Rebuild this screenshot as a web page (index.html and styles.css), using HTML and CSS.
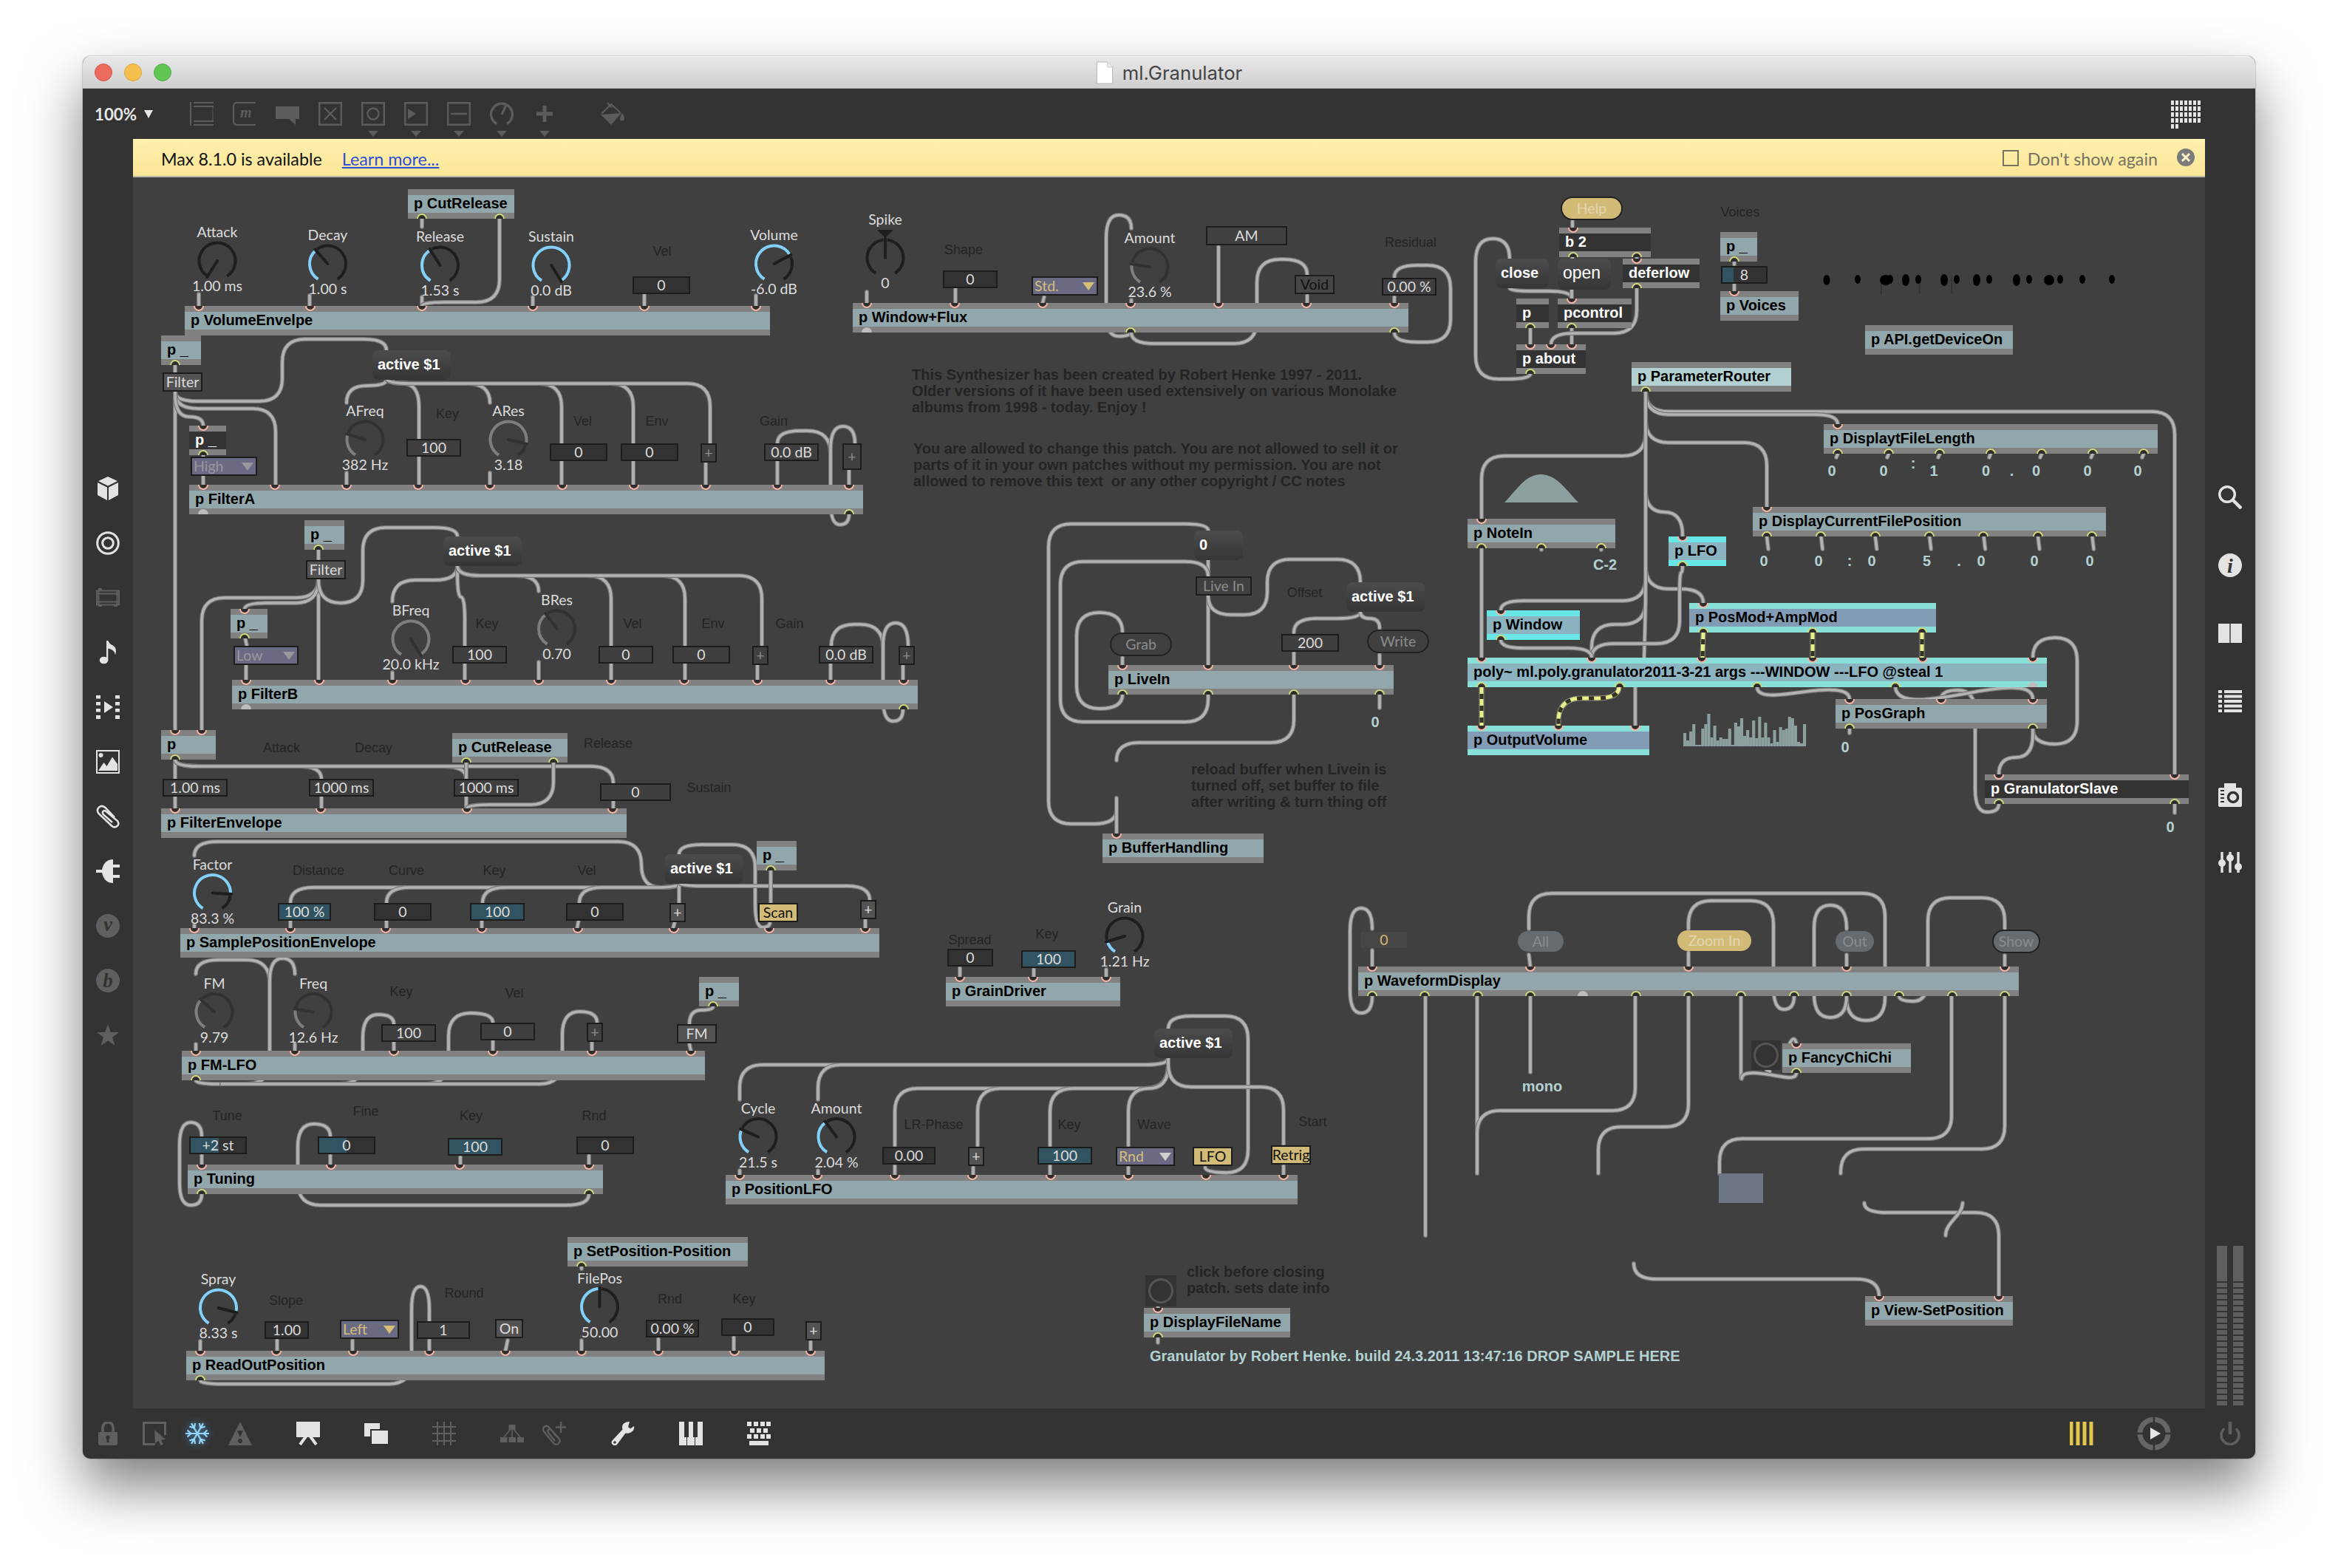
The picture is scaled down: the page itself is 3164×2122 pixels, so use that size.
FILE: index.html
```html
<!DOCTYPE html>
<html lang="en">
<head>
<meta charset="utf-8">
<title>ml.Granulator</title>
<link rel="stylesheet" href="styles.css">
</head>
<body>
<div class="window">
  <header class="titlebar">
    <div class="lights"><i class="light red"></i><i class="light amber"></i><i class="light green"></i></div>
    <div class="title">
      <svg class="doc" viewBox="0 0 24 32"><path d="M1 1h15l7 7v23H1z" fill="#fff" stroke="#b5b5b5"/><path d="M16 1v7h7" fill="#f0f0f0" stroke="#c4c4c4"/></svg>
      <span>ml.Granulator</span>
    </div>
  </header>

  <div class="toolbar">
    <div class="zoom">100%<i class="tri"></i></div>
    <div class="tools">
      <svg class="icon" viewBox="0 0 32 32"><g fill="none" stroke="currentColor" stroke-width="2"><path d="M1 0v32M5 1h27M5 6h27M5 26h27M5 31h27"/><path d="M31 6v20" opacity=".4"/></g></svg>
      <svg class="icon" viewBox="0 0 32 32"><path d="M31 1H6Q1 1 1 6v20q0 5 5 5h25" fill="none" stroke="currentColor" stroke-width="2.2"/><text x="10" y="21" class="glyph-m">m</text></svg>
      <svg class="icon" viewBox="0 0 32 32"><path d="M0 6h32v17h-5v8l-9-8H0z" fill="currentColor"/></svg>
      <svg class="icon" viewBox="0 0 32 32"><path d="M1.200 1.200h29.600v29.600H1.200zM8 8l16 16M24 8L8 24" fill="none" stroke="currentColor" stroke-width="2.400"/></svg>
      <svg class="icon has-menu" viewBox="0 0 32 48"><path d="M1.200 1.200h29.600v29.600H1.200z" fill="none" stroke="currentColor" stroke-width="2.400"/><circle cx="16" cy="16" r="7.500" fill="none" stroke="currentColor" stroke-width="2.400"/><path d="M9 39h14l-7 8z" fill="currentColor"/></svg>
      <svg class="icon has-menu" viewBox="0 0 32 48"><path d="M1.200 1.200h29.600v29.600H1.200z" fill="none" stroke="currentColor" stroke-width="2.400"/><path d="M5 9l11 7-11 7zM9 39h14l-7 8z" fill="currentColor"/></svg>
      <svg class="icon has-menu" viewBox="0 0 32 48"><path d="M1.200 1.200h29.600v29.600H1.200zM5 16h22" fill="none" stroke="currentColor" stroke-width="2.400"/><path d="M9 39h14l-7 8z" fill="currentColor"/></svg>
      <svg class="icon has-menu" viewBox="0 0 32 48"><path d="M9 29.500A14.500 14.500 0 1 1 23 29.500" fill="none" stroke="currentColor" stroke-width="3.400"/><path d="M16 17l6-13" stroke="currentColor" stroke-width="3"/><path d="M9 39h14l-7 8z" fill="currentColor"/></svg>
      <svg class="icon has-menu" viewBox="0 0 32 48"><path d="M16 5v22M5 16h22" stroke="currentColor" stroke-width="5"/><path d="M9 39h14l-7 8z" fill="currentColor"/></svg>
      <svg class="icon bucket" viewBox="0 0 32 32"><path d="M1 16L14 3l13 12M9 1l6 7" fill="none" stroke="currentColor" stroke-width="2"/><path d="M0 17l28-2-14 16zM29 15q6 10 0 10.500-6-.5 0-10.500z" fill="currentColor"/></svg>
    </div>
    <svg class="console" id="console" viewBox="0 0 40 38"></svg>
  </div>

  <div class="middle">
    <nav class="side left">
      <svg class="icon" viewBox="0 0 32 32"><path d="M16 0l13 6-13 6.500L3 6zM2 8l13 6.500V32L2 25zM30 8l-13 6.500V32l13-7z" fill="currentColor"/></svg>
      <svg class="icon" viewBox="0 0 32 32"><g fill="none" stroke="currentColor" stroke-width="3"><circle cx="16" cy="16" r="14.300"/><circle cx="16" cy="16" r="7.300"/></g></svg>
      <svg class="icon dim" viewBox="0 0 32 32"><path d="M1 6.500h30v19H1zM1 10.500h30M1 21.500h30M3.500 6v20M28.500 6v20" fill="none" stroke="currentColor" stroke-width="2"/><path d="M3 3h5v4H3zM3 25h5v3H3zM24 25h5v3h-5z" fill="currentColor"/></svg>
      <svg class="icon" viewBox="0 0 32 32"><ellipse cx="10.500" cy="26.500" rx="5.800" ry="4.800" fill="currentColor"/><path d="M14 0h2.300q2 5 6.700 6.500 6 4 3 13-.5-7-9.700-9V27H14z" fill="currentColor"/></svg>
      <svg class="icon" viewBox="0 0 32 32"><path d="M0 0h6v4.500H0zm0 9h6v4.500H0zm0 9h6v4.500H0zm0 9h6V32H0zM26 0h6v4.500h-6zm0 9h6v4.500h-6zm0 9h6v4.500h-6zm0 9h6V32h-6zM11 8l12 8-12 8z" fill="currentColor"/></svg>
      <svg class="icon" viewBox="0 0 32 32"><path d="M1 1h30v30H1z" fill="none" stroke="currentColor" stroke-width="2"/><circle cx="6.500" cy="7" r="3" fill="currentColor"/><path d="M3 28l7.500-11 4 5L22 9.500 29 19v9z" fill="currentColor"/></svg>
      <svg class="icon" viewBox="0 0 32 32"><path d="M25 17L12.500 4Q8 0 4 3.500T3.500 12L21 28.500q4 3.500 7.500.5t.5-7L13.500 9Q11 7 9.500 9t.5 4.500L22 24" fill="none" stroke="currentColor" stroke-width="2.500"/></svg>
      <svg class="icon" viewBox="0 0 32 32"><path d="M23 0v7h9v4h-9v10h9v4h-9v7q-12 0-15-14H0v-4h8Q11 0 23 0z" fill="currentColor"/></svg>
      <svg class="icon dim" viewBox="0 0 32 32"><circle cx="16" cy="16" r="16" fill="currentColor"/><text x="16" y="23" class="glyph-round">v</text></svg>
      <svg class="icon dim" viewBox="0 0 32 32"><circle cx="16" cy="16" r="16" fill="currentColor"/><text x="16" y="25" class="glyph-round">b</text></svg>
      <svg class="icon dim" viewBox="0 0 32 32"><path d="M16 1l3.700 11H31l-9 6.800L25.500 30 16 23.200 6.500 30 10 18.800 1 12h11.300z" fill="currentColor"/></svg>
    </nav>

    <div class="center">
      <div class="banner">
        <span>Max 8.1.0 is available</span>
        <a class="link">Learn more...</a>
        <div class="dismiss">
          <i class="check"></i><span>Don't show again</span>
          <svg class="close" viewBox="0 0 24 24"><circle cx="12" cy="12" r="12" fill="#7b7b7b"/><path d="M7 7l10 10M17 7L7 17" stroke="#fdf3c8" stroke-width="3"/></svg>
        </div>
      </div>
      <main class="patch" id="patch"></main>
    </div>

    <nav class="side right">
      <svg class="icon r1" viewBox="0 0 32 32"><circle cx="12" cy="12" r="10.300" fill="none" stroke="currentColor" stroke-width="3.400"/><path d="M19 19l12 12" stroke="currentColor" stroke-width="4.500"/></svg>
      <svg class="icon r2" viewBox="0 0 32 32"><circle cx="16" cy="16" r="16" fill="currentColor"/><text x="16" y="25.500" class="glyph-i">i</text></svg>
      <svg class="icon r3" viewBox="0 0 32 32"><path d="M0 3h15.300v26H0zM16.700 3H32v26H16.700z" fill="currentColor"/></svg>
      <svg class="icon r4" viewBox="0 0 32 32"><path d="M0 1h5v4H0zM8 1h24v4H8zM0 7.500h5v4H0zM8 7.500h24v4H8zM0 14h5v4H0zM8 14h24v4H8zM0 20.500h5v4H0zM8 20.500h24v4H8zM0 27h5v4H0zM8 27h24v4H8z" fill="currentColor"/></svg>
      <svg class="icon r5" viewBox="0 0 32 32"><path d="M8 0h16v6h6q2 0 2 2v22q0 2-2 2H2q-2 0-2-2V8q0-2 2-2h6z" fill="currentColor"/><circle cx="20" cy="19" r="6.500" fill="none" stroke="#333" stroke-width="3.500"/><path d="M3 10h5M3 15h5M3 20h5M3 25h5" stroke="#333" stroke-width="2"/></svg>
      <svg class="icon r6" viewBox="0 0 32 32"><path d="M5 2v28M16 2v28M27 2v28" stroke="currentColor" stroke-width="3.400"/><g fill="currentColor"><circle cx="5" cy="17" r="5"/><circle cx="16" cy="10" r="5"/><circle cx="27" cy="22" r="5"/></g></svg>
      <div class="meters"><i class="meter"></i><i class="meter"></i></div>
    </nav>
  </div>

  <footer class="statusbar">
    <div class="group g1">
      <svg class="icon dim" viewBox="0 0 32 32"><path d="M9 15V9q0-8 7-8t7 8v6" fill="none" stroke="currentColor" stroke-width="3.600"/><path d="M3 14h26v16q0 2-2 2H5q-2 0-2-2z" fill="currentColor"/><path d="M16 18.500a3 3 0 0 1 1.500 5.500V28h-3v-4a3 3 0 0 1 1.500-5.500z" fill="#333"/></svg>
      <svg class="icon dim pointer" viewBox="0 0 32 32"><path d="M17 30.500H1.500V1.500h29V18" fill="none" stroke="currentColor" stroke-width="3"/><path d="M16 11l15 13-6 .5 3 6-3.500 1.500-3-6-4.500 3z" fill="currentColor"/></svg>
      <svg class="icon frost" viewBox="0 0 32 32">
        <defs><path id="arm" d="M16 16H32M29.500 11.500L24.500 16l5 4.500"/></defs>
        <g fill="none" stroke="#93d5fb" stroke-width="2.200">
          <use href="#arm"/><use href="#arm" transform="rotate(60 16 16)"/><use href="#arm" transform="rotate(120 16 16)"/>
          <use href="#arm" transform="rotate(180 16 16)"/><use href="#arm" transform="rotate(240 16 16)"/><use href="#arm" transform="rotate(300 16 16)"/>
        </g>
      </svg>
      <svg class="icon dim" viewBox="0 0 32 32"><path d="M16 0l16 32H0z" fill="currentColor"/><path d="M12 12h8l-4 9z" fill="#333"/><circle cx="16" cy="26" r="3" fill="#333"/></svg>
    </div>
    <div class="group g2">
      <svg class="icon" viewBox="0 0 32 32"><path d="M0 0h32v21H0z" fill="currentColor"/><path d="M13 20L5 31M19 20l8 11" stroke="currentColor" stroke-width="4"/></svg>
      <svg class="icon" viewBox="0 0 32 32"><path d="M0 2h21v8H8v10H0zM10 12h22v18H10z" fill="currentColor"/></svg>
      <svg class="icon dim" viewBox="0 0 32 32"><path d="M7 0v32M16 0v32M25 0v32M0 7h32M0 16h32M0 26h32" stroke="currentColor" stroke-width="2"/></svg>
      <svg class="icon dim" viewBox="0 0 32 32"><path d="M11.500 4h9v7h-9zM0 21h9.500v7H0zM11.500 21H21v7h-9.500zM23 21h9v7h-9z" fill="currentColor"/><path d="M16 10v12M14 10L5 21M18 10l9 11" stroke="currentColor" stroke-width="1.600"/></svg>
    </div>
    <svg class="icon dim clipplus" viewBox="0 0 32 32"><path d="M19 20L9.500 8Q5.500 4 2.500 7T2.500 14L15 29q4 3.500 7 .5T22.500 23L12 11q-2.500-2-4 0t.5 4.500L17 26M25 0v15M18 7.500h14" fill="none" stroke="currentColor" stroke-width="2.300"/></svg>
    <div class="group g3">
      <svg class="icon" viewBox="0 0 32 32"><path d="M25 0q-7 0-9.500 4.500-1 3 0 6L2 25q-3 3 0 6t6 0L19.500 15.500q5 1 8-1.500Q32 11 31 6l-5 3.500-3-2.500z" fill="currentColor"/><circle cx="5" cy="28" r="1.800" fill="#333"/></svg>
      <svg class="icon" viewBox="0 0 32 32"><path d="M0 0h7v21h3v11H0zM11 32V21h2V0h6v21h2v11zM22 32V21h3V0h7v32z" fill="currentColor"/></svg>
      <svg class="icon" viewBox="0 0 32 32"><path d="M0 0h6v6H0zm9 0h6v6H9zm9 0h6v6h-6zm8 0h6v6h-6zM4 9h6v6H4zm9 0h6v6h-6zm9 0h6v6h-6zM0 17h6v6H0zm9 0h6v6H9zm9 0h6v6h-6zm8 0h6v6h-6zM3 26h26v6H3z" fill="currentColor"/></svg>
    </div>
    <div class="audio">
      <svg class="icon bars" viewBox="0 0 32 32"><path d="M2 0v32M11 0v32M20 0v32M29 0v32" stroke="#e3c74d" stroke-width="5"/></svg>
      <svg class="play" viewBox="0 0 46 46"><circle cx="23" cy="23" r="19" fill="none" stroke="#666" stroke-width="7"/><path d="M23 0v46M0 23h46" stroke="#333" stroke-width="2.500"/><circle cx="23" cy="23" r="15" fill="#333"/><path d="M18 15l14 8-14 8z" fill="#e6e6e6"/></svg>
      <svg class="icon dim power" viewBox="0 0 32 32"><path d="M8 9.500a12 12 0 1 0 16 0" fill="none" stroke="currentColor" stroke-width="3.600"/><path d="M16 0v17" stroke="currentColor" stroke-width="4.500"/></svg>
    </div>
  </footer>
</div>
<script src="patch.js"></script>
</body>
</html>
```

FILE: styles.css
```css
* { box-sizing: border-box; }
body {
  margin: 0;
  width: 3164px;
  height: 2122px;
  padding: 76px 112px 0;
  background: #fff;
  overflow: hidden;
  font-family: Lato, sans-serif;
}
.window {
  width: 2940px;
  height: 1898px;
  display: flex;
  flex-direction: column;
  background: #333;
  border-radius: 10px;
  overflow: hidden;
  box-shadow: 0 0 2px rgba(0, 0, 0, .45), 0 38px 76px rgba(0, 0, 0, .5);
}

/* title bar */
.titlebar {
  height: 44px;
  flex: none;
  display: grid;
  grid-template-columns: 1fr auto 1fr;
  align-items: center;
  background: linear-gradient(#e8e8e8, #cfcfcf);
  border-bottom: 1px solid #ababab;
  box-shadow: inset 0 1px 0 #f6f6f6;
}
.lights { display: flex; gap: 16px; padding-left: 16px; }
.light { width: 24px; height: 24px; border-radius: 50%; border: 1px solid; }
.red { background: #ed6a5e; border-color: #d9564b; }
.amber { background: #f5bf4f; border-color: #dda33c; }
.green { background: #61c554; border-color: #4fae43; }
.title {
  display: flex;
  align-items: center;
  gap: 12px;
  font: 25.700px/1 Inter, sans-serif;
  color: #444;
  padding-top: 2px;
}
.doc { width: 24px; height: 31px; }

/* icons */
.icon { width: 32px; height: 32px; flex: none; color: #e3e3e3; display: block; }
.dim { color: #5f5f5f; }
.glyph-m { font: italic bold 20px "Liberation Serif", serif; fill: currentColor; }
.glyph-round { font: italic bold 27px "Liberation Serif", serif; fill: #333; text-anchor: middle; }
.glyph-i { font: italic bold 28px "Liberation Serif", serif; fill: #333; text-anchor: middle; }

/* top toolbar */
.toolbar {
  height: 68px;
  flex: none;
  display: flex;
  align-items: flex-start;
  padding: 16px 74px 0 16px;
}
.zoom {
  width: 129px;
  height: 36px;
  display: flex;
  align-items: center;
  gap: 10px;
  color: #e6e6e6;
  font-weight: bold;
  font-size: 22.300px;
}
.tri { border: 6px solid transparent; border-top: 11px solid #e6e6e6; border-bottom: 0; }
.tools { display: flex; gap: 26px; }
.tools .icon { color: #5c5c5c; margin-top: 2px; }
.tools .has-menu { height: 48px; }
.tools .bucket { margin-left: 34px; }
.console { width: 40px; height: 38px; margin-left: auto; }
.console rect { fill: #e3e3e3; }

/* side bars */
.middle { flex: 1; display: flex; min-height: 0; }
.side { width: 68px; flex: none; display: flex; flex-direction: column; align-items: center; }
.left { padding-top: 457px; gap: 42px; }
.right { padding-top: 469px; }
.r2, .r3, .r4 { margin-top: 60px; }
.r5 { margin-top: 95px; }
.r6 { margin-top: 59px; }
.meters { display: flex; gap: 8px; margin-top: auto; margin-bottom: 4px; }
.meter {
  width: 14px;
  height: 216px;
  background:
    linear-gradient(#5f5f5f, #5f5f5f) top / 100% 48px no-repeat,
    repeating-linear-gradient(to top, #5f5f5f 0 6px, transparent 6px 8px);
}

/* bottom bar */
.statusbar { height: 68px; flex: none; display: flex; align-items: center; padding: 0 18px; }
.group { display: flex; gap: 60px; }
.g1 { gap: 26px; }
.pointer { margin-left: 5px; }
.frost { filter: drop-shadow(0 0 5px rgba(80, 165, 230, .7)); }
.g2 { margin-left: 60px; }
.clipplus { margin-left: 25px; }
.g3 { margin-left: 61px; }
.audio { display: flex; align-items: center; margin-left: auto; }
.play { width: 46px; height: 46px; margin: 0 64px 0 59px; }

/* update banner */
.center { flex: 1; display: flex; flex-direction: column; background: #404040; min-width: 0; }
.banner {
  height: 52px;
  flex: none;
  display: flex;
  align-items: center;
  gap: 27px;
  padding: 3px 14px 0 38px;
  background: linear-gradient(#fff0b0, #fae695);
  border-bottom: 2px solid #b9b9ae;
  color: #111;
  font-size: 23.300px;
}
.link { color: #2f4fd8; text-decoration: underline; }
.dismiss { margin-left: auto; display: flex; align-items: center; gap: 12px; color: #757264; }
.check { width: 22px; height: 22px; border: 2px solid #77735f; margin-top: -2px; }
.close { width: 24px; height: 24px; margin: -3px 0 0 14px; }

/* patch canvas */
.patch { flex: 1; position: relative; overflow: hidden; background: #404040; }
.cords, .drawings { position: absolute; inset: 0; width: 100%; height: 100%; }
.cord-edge { fill: none; stroke: #767676; stroke-width: 6; stroke-linecap: round; }
.cord { fill: none; stroke: #b3b3b3; stroke-width: 3.600; stroke-linecap: round; }
.signal-edge { fill: none; stroke: #8c8c7c; stroke-width: 7; }
.signal-base { fill: none; stroke: #33331f; stroke-width: 5; }
.signal { fill: none; stroke: #e6f08c; stroke-width: 5; stroke-dasharray: 9 7; }

.obj {
  position: absolute;
  height: 40px;
  border: solid #818181;
  border-width: 8px 0;
  background: #91a7ab;
  font: bold 20px/22px "Liberation Sans", Arial, sans-serif;
  color: #000;
  padding-left: 8px;
  white-space: nowrap;
}
.obj.dark { background: #333; color: #fff; }
.obj.pale { background: #b4d1d1; }
.obj.cyan { background: #8cb4c0; border-color: #69e6e6; }
.obj.poly { background: #8cb4c0; border-color: #88e0d8; }
.obj.steel { background: #839cb5; border-color: #88e0d8; }
.port { position: absolute; width: 14px; height: 7px; margin-left: -7px; background: #2e2e2e; border: 2px solid; }
.in { top: -8px; border-color: #f7b4a4; border-top: 0; border-radius: 0 0 7px 7px; }
.out { bottom: -8px; border-color: #d3d97a; border-bottom: 0; border-radius: 7px 7px 0 0; }
.out.idle { background: #bdbdbd; border-color: #bdbdbd; }

.msg {
  position: absolute;
  height: 40px;
  border-radius: 8px;
  background: linear-gradient(#4c4c4c, #353535);
  font: bold 20px/38px "Liberation Sans", Arial, sans-serif;
  color: #fff;
  padding-left: 7px;
  white-space: nowrap;
}
.msg.plain { font-weight: normal; font-size: 23px; height: 42px; }

.box {
  position: absolute;
  height: 24px;
  border: 2px solid #1c1c1c;
  display: flex;
  align-items: center;
  justify-content: center;
  font-size: 19.500px;
  line-height: 1;
  color: #dcdcdc;
  white-space: nowrap;
}
.box.dark { background: #323232; }
.box.flat { background: #3f3f3f; }
.box.teal { background: #325462; }
.box.btn { background: #535353; height: 26px; }
.box.flatbtn { background: #404040; height: 26px; }
.box.off { background: #404040; height: 26px; color: #8b8b8b; }
.box.void { background: #464646; height: 26px; color: #111; }
.box.on { background: #d2bb77; height: 26px; color: #111; }
.box.ghost { background: #464646; border-color: #464646; height: 22px; color: #d2bb77; }
.box.menu { background: #6a6a84; height: 26px; justify-content: space-between; padding: 0 3px 0 2px; color: #d6be78; }
.box.menu::after { content: ""; border: 8px solid transparent; border-top: 11px solid currentColor; border-bottom: 0; }
.box.menu.faded { color: #98989c; }
.box.menu.white-tip::after { border-top-color: #d0d0d0; }
.pill {
  position: absolute;
  height: 32px;
  border: 2px solid #222;
  border-radius: 16px;
  display: flex;
  align-items: center;
  justify-content: center;
  font-size: 19.500px;
  line-height: 1;
  color: #8c8c8c;
  background: #404040;
}
.pill.bare { border: 0; height: 28px; }
.pill.slate { background: #666b70; color: #878b8e; }
.pill.gold { background: #d2bb77; color: #e2d6b0; }

.dial-text, .label, .value, .note { position: absolute; white-space: nowrap; }
.dial-text { transform: translate(-50%, -50%); font-size: 19.500px; line-height: 1; color: #dcdcdc; }
.label {
  transform: translate(-50%, -50%);
  font: 18px/1 "Liberation Sans", Arial, sans-serif;
  color: #242424;
}
.value {
  transform: translate(-50%, -50%);
  font: bold 20px/1 "Liberation Sans", Arial, sans-serif;
  color: #b4d1d1;
}
.note {
  font: bold 20px/22px "Liberation Sans", Arial, sans-serif;
  color: #242424;
  white-space: pre;
}
.note.bright { color: #b4d1d1; }
.bang { position: absolute; background: #333; display: flex; align-items: center; justify-content: center; }
.bang::before { content: ""; width: 28px; height: 28px; border: 3px solid #555; border-radius: 50%; }
.swatch { position: absolute; background: #6c7684; }
```

FILE: patch.js
```js
// Patch coordinates are window coordinates; the canvas starts at (OX, OY).
const OX = 180, OY = 240;
const patch = document.getElementById('patch');
const NS = 'http://www.w3.org/2000/svg';

function svgLayer(cls) {
  const s = document.createElementNS(NS, 'svg');
  s.setAttribute('class', cls);
  s.setAttribute('viewBox', `${OX} ${OY} 2804 1666`);
  patch.appendChild(s);
  return s;
}
function shape(parent, tag, attrs) {
  const e = document.createElementNS(NS, tag);
  for (const k in attrs) e.setAttribute(k, attrs[k]);
  parent.appendChild(e);
}
function node(cls, x, y, text, w, h) {
  const e = document.createElement('div');
  e.className = cls;
  e.style.left = (x - OX) + 'px';
  e.style.top = (y - OY) + 'px';
  if (w) e.style.width = w + 'px';
  if (h) e.style.height = h + 'px';
  if (text) e.textContent = text;
  patch.appendChild(e);
  return e;
}

// Segmented cord: orthogonal points with soft elliptical corners.
function cordPath(p) {
  const n = p.length / 2, pt = i => [p[2 * i], p[2 * i + 1]];
  const len = i => Math.hypot(p[2 * i + 2] - p[2 * i], p[2 * i + 3] - p[2 * i + 1]);
  let d = `M${pt(0)}`;
  for (let i = 1; i < n - 1; i++) {
    const [ax, ay] = pt(i - 1), [x, y] = pt(i), [bx, by] = pt(i + 1);
    const la = len(i - 1), lb = len(i);
    const ra = Math.min(31, i === 1 ? la : la / 2), rb = Math.min(31, i === n - 2 ? lb : lb / 2);
    const sx = x + (ax - x) * ra / la, sy = y + (ay - y) * ra / la;
    const ex = x + (bx - x) * rb / lb, ey = y + (by - y) * rb / lb;
    const k = .66;
    d += `L${sx},${sy}C${sx + (x - sx) * k},${sy + (y - sy) * k} ${ex + (x - ex) * k},${ey + (y - ey) * k} ${ex},${ey}`;
  }
  return d + `L${pt(n - 1)}`;
}

const cords = [
  // volume envelope
  [269,398,269,414],[419,400,419,414],[571,402,571,414],[721,402,721,414],[872,398,872,414],[1023,400,1023,414],
  [571,296,571,307],[676,296,676,409,571,409,571,414],
  // filter A
  [237,494,237,504],[237,530,237,988],[237,530,237,543,382,543,382,459,523,459,523,474],
  [237,530,237,553,373,553,373,656],[237,530,237,564,275,564,275,576],[275,616,275,619],[275,644,275,656],
  [523,514,523,522,469,522,469,545],[523,512,523,519,567,519,567,594],[523,512,523,519,663,519,663,545],
  [523,512,523,519,760,519,760,600],[523,512,523,519,857,519,857,600],[523,512,523,519,961,519,961,600],
  [469,640,469,656],[567,618,567,656],[663,640,663,656],[760,624,760,656],[857,624,857,656],[955,626,955,656],
  [1052,624,1052,656],[1149,636,1149,656],
  [1149,696,1149,710,1124,710,1124,583,1052,583,1052,600],[1124,660,1124,577,1157,577,1157,600],
  // filter B
  [431,744,431,756],[431,784,431,920],[431,784,431,809,273,809,273,988],[431,784,431,816,331,816,331,824],
  [431,784,431,816,491,816,491,714,619,714,619,726],[332,864,334,874],[333,898,333,920],
  [619,766,619,785,531,785,531,814],[619,766,619,808,629,808,629,874],
  [619,766,619,779,729,779,729,800],[619,766,619,779,827,779,827,874],[619,766,619,779,927,779,927,874],[619,766,619,779,1031,779,1031,874],
  [531,910,531,920],[629,898,629,920],[729,896,729,920],[827,898,827,920],[927,898,927,920],[1025,900,1025,920],[1124,898,1124,920],[1222,900,1222,920],
  [1222,960,1222,976,1195,976,1195,845,1125,845,1125,874],[1195,925,1195,843,1229,843,1229,874],
  // filter envelope
  [237,1028,237,1054],[237,1028,237,1037,435,1037,435,1054],[237,1028,237,1037,631,1037,631,1054],[237,1028,237,1037,830,1037,830,1060],
  [237,1078,237,1094],[435,1078,435,1094],[631,1032,631,1054],[631,1078,631,1094],[830,1084,830,1094],
  [749,1032,749,1089,632,1089,632,1094],
  // sample position envelope
  [919,1156,919,1143,1022,1143,1022,1255,1042,1255,1042,1248],
  [919,1196,919,1201,868,1201,868,1139,263,1139,263,1158],
  [919,1196,919,1201,393,1201,393,1222],[919,1196,919,1201,523,1201,523,1222],[919,1196,919,1201,653,1201,653,1222],[919,1196,919,1201,784,1201,784,1222],
  [919,1196,919,1222],[919,1194,919,1199,1177,1199,1177,1218],[1043,1178,1043,1222],
  [263,1252,263,1256],[393,1246,393,1256],[523,1246,523,1256],[652,1246,652,1256],[783,1246,781,1256],[913,1248,911,1256],[1171,1244,1171,1256],
  // FM LFO
  [265,1462,265,1467,365,1467,365,1299,265,1299,265,1318],[300,1467,365,1467,365,1297,399,1297,399,1318],
  [300,1467,491,1467,491,1373,533,1373,533,1386],[300,1467,607,1467,607,1371,667,1371,667,1384],[300,1467,761,1467,761,1369,808,1369,808,1384],
  [265,1413,265,1422],[399,1413,399,1422],[533,1410,533,1422],[667,1408,667,1422],[801,1411,801,1422],[933,1413,935,1422],
  [965,1362,965,1367,933,1367,933,1386],
  // tuning
  [273,1616,273,1631,243,1631,243,1519,273,1519,273,1538],[797,1616,797,1631,403,1631,403,1521,447,1521,447,1538],
  [273,1564,273,1576],[447,1564,447,1576],[623,1566,623,1576],[797,1564,797,1576],
  // read-out position
  [271,1868,271,1873,557,1873,557,1741,581,1741,581,1788],[271,1815,271,1828],[375,1814,375,1828],[477,1814,477,1828],[581,1814,581,1828],
  [687,1814,684,1828],[787,1814,787,1828],[891,1812,891,1828],[993,1810,993,1828],[1097,1816,1097,1828],[787,1714,787,1717],
  // position LFO
  [1581,1392,1581,1375,1689,1375,1689,1587,1631,1587,1631,1580],
  [1581,1432,1581,1441,1001,1441,1001,1488],[1581,1432,1581,1441,1107,1441,1107,1488],
  [1581,1432,1581,1473,1211,1473,1211,1550],[1581,1432,1581,1473,1323,1473,1323,1550],[1581,1432,1581,1473,1421,1473,1421,1550],
  [1581,1432,1581,1473,1527,1473,1527,1550],[1581,1432,1581,1471,1737,1471,1737,1548],
  [1001,1584,1001,1590],[1107,1584,1107,1590],[1211,1578,1211,1590],[1317,1580,1317,1590],[1421,1578,1421,1590],[1527,1580,1527,1590],[1737,1578,1737,1590],
  // window + flux
  [1173,395,1173,410],[1293,391,1293,410],[1413,402,1411,410],[1531,406,1531,410],[1649,334,1649,410],[1769,400,1769,410],[1887,402,1887,410],
  [1530,450,1530,455,1497,455,1497,291,1531,291,1531,309],[1531,450,1531,465,1701,465,1701,351,1769,351,1769,372],
  [1887,450,1887,463,1963,463,1963,359,1887,359,1887,375],
  // live in
  [1635,718,1635,709,1419,709,1419,1115,1511,1115,1511,1096],[1511,1080,1511,1128],
  [1635,758,1635,780],[1635,780,1635,760,1435,760,1435,977,1635,977,1635,940],[1635,806,1635,900],
  [1635,806,1635,832,1715,832,1715,757,1841,757,1841,788],
  [1841,828,1841,837,1751,837,1751,856],[1841,828,1841,837,1867,837,1867,850],
  [1519,855,1519,829,1457,829,1457,959,1519,959,1519,940],[1519,890,1519,900],[1751,884,1751,900],[1867,886,1867,900],
  [1751,940,1751,1005,1511,1005,1511,1029],[1867,940,1867,958],
  // grain driver
  [1299,1310,1299,1322],[1399,1312,1399,1322],[1497,1312,1497,1322],
  // help / about
  [2128,299,2128,308],[2128,348,2128,350],[2215,348,2215,352],[2043,390,2043,394,2127,394,2127,404],[2127,392,2127,404],
  [2043,350,2043,323,1997,323,1997,513,2071,513,2071,506],[2071,444,2071,466],[2127,444,2127,466],
  [2215,390,2215,451,2099,451,2099,466],[2347,354,2347,358],[2347,385,2347,394],
  // parameter router
  [2227,530,2227,557,2943,557,2943,1048],[2227,530,2227,561,2487,561,2487,574],[2227,530,2227,599,2391,599,2391,686],
  [2227,530,2227,617,2005,617,2005,702],[2227,600,2227,693,2277,693,2277,726],[2227,700,2227,797,2305,797,2305,816],
  [2227,700,2227,813,2031,813,2031,826],[2227,700,2227,845,2154,845,2154,890],[2227,530,2227,820,2225,890],[2213,930,2213,982],
  [2277,766,2277,775,2273,775,2273,871,2154,871,2154,890],[2031,866,2031,877,2154,877,2154,890],[2005,742,2005,890],
  [2086,742,2086,744],[2167,742,2167,744],
  [2627,946,2627,934,2673,934,2673,1099,2705,1099,2705,1088],[2751,986,2751,1007,2811,1007,2811,863,2751,863,2751,890],
  [2751,986,2751,1025,2705,1025,2705,1048],[2503,986,2503,992],[2943,1088,2943,1100],
  // waveform display
  [1857,1257,1857,1229,1827,1229,1827,1371,1857,1371,1857,1348],[1857,1286,1857,1308],[1929,1348,1929,1672],[1999,1348,1999,1588],
  [2213,1348,2213,1503,1999,1503,1999,1588],[2071,1348,2071,1451],[2285,1348,2285,1525,2163,1525,2163,1588],[2356,1348,2356,1459],
  [2641,1348,2641,1541,2327,1541,2327,1588],[2713,1348,2713,1555,2491,1555,2491,1588],
  [2069,1257,2069,1209,2551,1209,2551,1381,2499,1381,2499,1348],[2285,1257,2285,1219,2400,1219,2400,1366,2428,1366,2428,1348],
  [2499,1257,2499,1225,2455,1225,2455,1377,2499,1377,2499,1348],[2713,1257,2713,1215,2609,1215,2609,1355,2570,1355,2570,1348],
  [2069,1292,2071,1308],[2285,1289,2285,1308],[2499,1292,2499,1308],[2713,1293,2713,1308],
  [2523,1628,2523,1641,2705,1641,2705,1754],[2211,1710,2211,1731,2543,1731,2543,1754],
  // file name
  [1567,1768,1567,1770],[1567,1810,1567,1817],
];
for (let i = 0; i < 7; i++) {
  cords.push([2487 + i * 69, 614, 2485 + i * 69, 619]);
  cords.push([2391 + i * 73.4, 726, 2393 + i * 73.4, 743]);
}
const freeCords = [
  'M2378,930C2378,950 2430,936 2462,934Q2503,931 2503,946',
  'M2565,930C2567,957 2620,946 2680,935C2730,927 2751,930 2751,946',
  'M2431,1452C2431,1466 2400,1452 2372,1452Q2357,1452 2357,1460',
  'M2656,1628C2656,1645 2633,1654 2633,1672',
  'M2422,1412Q2428,1400 2431,1412', 'M2391,1448L2395,1450',
];
const signals = [[2005,930,2005,982],[2191,930,2191,945,2109,945,2109,982],[2305,856,2304,890],[2453,856,2453,890],[2601,856,2601,890]];

const back = svgLayer('cords');
for (const d of cords.map(cordPath).concat(freeCords)) {
  shape(back, 'path', { d, class: 'cord-edge' });
  shape(back, 'path', { d, class: 'cord' });
}
for (const s of signals) {
  const d = cordPath(s);
  for (const c of ['signal-edge', 'signal-base', 'signal']) shape(back, 'path', { d, class: c });
}

// Objects: x, y, width, text, inlets, outlets, style, idle outlet index
const objects = [
  [552,256,144,'p CutRelease',0,[19,124]],[250,414,792,'p VolumeEnvelpe',6,0],[218,454,54,'p _',0,1],
  [256,576,50,'p _',1,1,'dark'],[256,656,912,'p FilterA',10,2,'',0],
  [412,704,54,'p _',0,1],[312,824,50,'p _',1,1],[314,920,928,'p FilterB',10,2,'',0],
  [218,988,74,'p',2,1],[612,992,156,'p CutRelease',0,2],[218,1094,630,'p FilterEnvelope',4,0],
  [1024,1138,54,'p _',0,1],[244,1256,946,'p SamplePositionEnvelope',8,0],
  [946,1322,54,'p _',0,1],[246,1422,708,'p FM-LFO',6,1],[254,1576,562,'p Tuning',4,2],
  [768,1674,244,'p SetPosition-Position',0,1],[252,1828,864,'p ReadOutPosition',9,1],[982,1590,774,'p PositionLFO',8,0],
  [1154,410,752,'p Window+Flux',7,[19,376,733],'',0],[1500,900,386,'p LiveIn',4,4],[1492,1128,218,'p BufferHandling',1,0],
  [1280,1322,236,'p GrainDriver',3,0],[1838,1308,894,'p WaveformDisplay',5,13,'',4],[1548,1770,198,'p DisplayFileName',1,1],
  [2524,1754,200,'p View-SetPosition',2,0],[2412,1412,174,'p FancyChiChi',1,1],
  [2110,308,124,'b 2',1,2,'dark'],[2196,350,104,'deferlow',1,1,'dark'],[2052,404,44,'p',0,1,'dark'],
  [2108,404,100,'pcontrol',1,1,'dark'],[2052,466,94,'p about',[19,47,75],1,'dark'],
  [2328,314,50,'p _',0,1],[2328,394,106,'p Voices',1,0],[2524,440,200,'p API.getDeviceOn',0,0],
  [2208,490,216,'p ParameterRouter',0,1,'pale'],[2468,574,452,'p DisplaytFileLength',1,7],
  [2372,686,478,'p DisplayCurrentFilePosition',1,7],[1986,702,200,'p NoteIn',1,3],
  [2258,726,78,'p LFO',1,1,'cyan'],[2012,826,126,'p Window',1,1,'cyan'],[2286,816,334,'p PosMod+AmpMod',1,3,'steel'],
  [1986,890,784,'poly~ ml.poly.granulator2011-3-21 args ---WINDOW ---LFO @steal 1',6,5,'poly',4],
  [1986,982,246,'p OutputVolume',3,0,'steel'],[2484,946,286,'p PosGraph',3,2],[2686,1048,276,'p GranulatorSlave',2,2,'dark'],
];
function ports(n, w) {
  if (Array.isArray(n)) return n;
  return Array.from({ length: n }, (_, i) => n === 1 ? 19 : 19 + i * (w - 38) / (n - 1));
}
for (const [x, y, w, text, ins, outs, style = '', idle = -1] of objects) {
  const e = node('obj ' + style, x, y, text, w);
  const add = (cls, px) => {
    const p = document.createElement('i');
    p.className = 'port ' + cls;
    p.style.left = px + 'px';
    e.appendChild(p);
  };
  ports(ins, w).forEach(px => add('in', px));
  ports(outs, w).forEach((px, i) => add(i === idle ? 'out idle' : 'out', px));
}

// Message boxes
for (const [x, y, w, t, c = ''] of [
  [504,474,106,'active $1'],[600,726,106,'active $1'],[900,1156,106,'active $1'],[1562,1392,106,'active $1'],
  [1822,788,106,'active $1'],[1616,718,66,'0'],[2024,350,72,'close'],[2108,350,72,'open','plain'],
]) node('msg ' + c, x, y, t, w);

// Number boxes, text buttons and menus; a trailing number is the filled share
for (const [c, x, y, w, t, fill] of [
  ['dark',856,374,78,'0'],['flat',550,594,74,'100'],['dark',744,600,78,'0'],['dark',840,600,78,'0'],['off',948,600,22,'+'],
  ['flat',1034,600,74,'0.0 dB'],['flat',612,874,74,'100'],['flat',810,874,74,'0'],['flat',910,874,78,'0'],['off',1018,874,22,'+'],
  ['flat',1108,874,74,'0.0 dB'],['off',1216,874,22,'+'],['flat',220,1054,88,'1.00 ms'],['flat',418,1054,88,'1000 ms'],
  ['flat',614,1054,88,'1000 ms'],['flat',812,1060,96,'0'],['teal',376,1222,72,'100 %'],['dark',506,1222,78,'0'],
  ['teal',636,1222,74,'100'],['dark',766,1222,78,'0'],['btn',906,1222,22,'+'],['on',1026,1222,54,'Scan'],['btn',1164,1218,22,'+'],
  ['flat',516,1386,74,'100'],['flat',650,1384,74,'0'],['off',794,1384,22,'+'],['btn',916,1386,54,'FM'],
  ['dark',256,1538,78,'+2 st',52],['dark',430,1538,78,'0',50],['teal',606,1540,74,'100'],['dark',780,1538,78,'0'],
  ['dark',358,1788,60,'1.00'],['menu',460,1786,80,'Left'],['flat',564,1788,72,'1'],['btn',670,1785,38,'On'],
  ['dark',874,1786,72,'0.00 %'],['dark',976,1784,72,'0'],['btn',1090,1788,22,'+'],
  ['dark',1194,1552,72,'0.00'],['btn',1310,1552,22,'+'],['teal',1404,1552,74,'100'],['menu white-tip',1510,1552,80,'Rnd'],
  ['on',1614,1552,54,'LFO'],['on',1720,1550,54,'Retrig'],['dark',1276,366,74,'0'],['menu',1396,374,90,'Std.'],
  ['flatbtn',1632,306,110,'AM'],['void',1752,372,54,'Void'],['flat',1870,376,74,'0.00 %'],
  ['off',1618,780,76,'Live In'],['flat',1734,858,78,'200'],['dark',1282,1284,62,'0'],['teal',1382,1286,74,'100'],
  ['btn',220,504,54,'Filter'],['btn',414,758,54,'Filter'],['menu faded',258,618,90,'High'],['menu faded',316,874,88,'Low'],
  ['dark',2329,360,63,'8',25],['ghost',1842,1261,62,'0'],
]) {
  const e = node('box ' + c, x, y, t, w);
  if (fill) e.style.background = `linear-gradient(90deg, #325462 ${fill}%, #323232 ${fill}%)`;
}
node('box off', 1140, 600, '+', 26, 36);

for (const [c, x, y, w, t] of [
  ['',1502,856,84,'Grab'],['',1850,852,84,'Write'],['gold',2112,266,84,'Help'],['bare slate',2054,1260,62,'All'],
  ['bare gold',2270,1259,100,'Zoom In'],['bare slate',2484,1260,52,'Out'],['slate',2696,1258,65,'Show'],
]) node('pill ' + c, x, y, t, w);

node('bang', 1550, 1726, '', 42, 42);
node('bang', 2370, 1408, '', 40, 40);
node('swatch', 2326, 1588, '', 60, 40);

// Dials: cx, cy, label, value text, position 0..1, style, label rise
const front = svgLayer('drawings');
const polar = (cx, cy, r, deg) => [cx + r * Math.cos(deg * Math.PI / 180), cy + r * Math.sin(deg * Math.PI / 180)];
function arc(cx, cy, r, a, b, stroke) {
  shape(front, 'path', {
    d: `M${polar(cx, cy, r, a)}A${r},${r} 0 ${b - a > 180 ? 1 : 0} 1 ${polar(cx, cy, r, b)}`,
    fill: 'none', stroke, 'stroke-width': 4,
  });
}
for (const [cx, cy, label, value, v, dim, rise = 39] of [
  [294,353,'Attack','1.00 ms',0],[443.5,357,'Decay','1.00 s',.36],[595.5,359,'Release','1.53 s',.39],
  [746,359,'Sustain','0.0 dB',1],[1047.5,357,'Volume','-6.0 dB',.71],[494,595,'AFreq','382 Hz',.255,1],
  [688,595,'ARes','3.18',.848,1],[556,865,'BFreq','20.0 kHz',1,1],[753.5,851,'BRes','0.70',.377,1],
  [287.5,1208.5,'Factor','83.3 %',.815],[290,1369.5,'FM','9.79',.34,1],[424,1369.5,'Freq','12.6 Hz',.228,1],
  [1026,1538.5,'Cycle','21.5 s',.277],[1132,1538.5,'Amount','2.04 %',.376],[295.5,1770,'Spray','8.33 s',.853],
  [811.5,1768.5,'FilePos','50.00',.5],[1198,349,'Spike','0',.5,2,52],[1556,361,'Amount','23.6 %',.225,1],
  [1522,1267,'Grain','1.21 Hz',.139],
]) {
  const a0 = 122, a1 = 418, av = a0 + (a1 - a0) * v;
  const track = dim === 1 ? '#323232' : '#1e1e1e', lit = dim === 1 ? '#7e7e7e' : dim === 2 ? '#1e1e1e' : '#83d1fb';
  if (v < 1) arc(cx, cy, 24.5, v ? av + 6 : a0, a1, track);
  if (v > 0) arc(cx, cy, 24.5, a0, dim === 2 ? av - 6 : av, lit);
  const [nx, ny] = polar(cx, cy, 26, av);
  shape(front, 'path', { d: `M${cx},${cy}L${nx},${ny}`, stroke: track, 'stroke-width': 4, 'stroke-linecap': 'round' });
  node('dial-text', cx, cy - rise, label);
  node('dial-text', cx, cy + 34, value);
}
shape(front, 'path', { d: 'M1187,311h22l-11,11z', fill: '#1e1e1e' });

// Envelope window, level history and voice dots
shape(front, 'path', { d: 'M2036,680C2052,664 2064,642 2085,642C2107,642 2120,664 2136,680z', fill: '#8ca09f' });
const levels = [18,8,20,30,2,2,24,30,44,12,28,8,12,10,10,24,2,32,27,38,14,22,12,35,11,40,12,32,12,4,22,6,26,22,24,40,38,28,6,4,30];
levels.forEach((h, i) => shape(front, 'rect', { x: 2278 + i * 4.05, y: 1010 - h, width: 4.1, height: h, fill: '#8ca09f' }));
for (const x of [2545, 2597, 2640.5]) shape(front, 'rect', { x, y: 374, width: 1.5, height: 24, fill: '#303030' });
for (const [x, rx, ry] of [[2472,4.5,7],[2514,4,6],[2552,8,7],[2558,4,6],[2579,5,8],[2596,4,6],[2631,5,8],[2648,4,6],[2675,5,8],
  [2692,4,6],[2729,5,8],[2746,4,6],[2773,7,7],[2788,4,6],[2818,4,6],[2858,4,6]])
  shape(front, 'ellipse', { cx: x, cy: 378 + (ry > 6 ? 1 : 0), rx, ry, fill: '#000' });

// Comments
for (const [x, y, t] of [
  [896,340,'Vel'],[605.5,560,'Key'],[788.5,570,'Vel'],[889,570,'Env'],[1047,570,'Gain'],[659,844,'Key'],[856,844,'Vel'],
  [965,844,'Env'],[1068.5,844,'Gain'],[381,1012,'Attack'],[505.5,1012,'Decay'],[823,1006,'Release'],[959.5,1066,'Sustain'],
  [431,1178,'Distance'],[550,1178,'Curve'],[669,1178,'Key'],[794,1178,'Vel'],[543,1342,'Key'],[696,1344,'Vel'],
  [307.5,1510,'Tune'],[495,1504,'Fine'],[637.5,1510,'Key'],[804,1510,'Rnd'],[387,1760,'Slope'],[628,1750,'Round'],
  [906.5,1758,'Rnd'],[1007,1758,'Key'],[1263.5,1522,'LR-Phase'],[1447,1522,'Key'],[1562,1522,'Wave'],[1776.5,1518,'Start'],
  [1304,338,'Shape'],[1909,328,'Residual'],[1765.5,802,'Offset'],[1312.5,1272,'Spread'],[1417,1264,'Key'],[2355,287,'Voices'],
]) node('label', x, y, t);

for (const [x, y, t] of [
  [1861,977,'0'],[2479,637,'0'],[2549,637,'0'],[2589,627,':'],[2617,637,'1'],[2687.5,637,'0'],[2722.5,637,'.'],[2755.5,637,'0'],
  [2825,637,'0'],[2893,637,'0'],[2387,759,'0'],[2461,759,'0'],[2503,759,':'],[2533,759,'0'],[2607.5,759,'5'],[2651,759,'.'],
  [2681,759,'0'],[2753,759,'0'],[2828,759,'0'],[2172,763.5,'C-2'],[2497,1010.5,'0'],[2937,1119,'0'],[2087,1470,'mono'],
]) node('value', x, y, t);

for (const [x, y, t, c = ''] of [
  [1234,496,'This Synthesizer has been created by Robert Henke 1997 - 2011.\nOlder versions of it have been used extensively on various Monolake\nalbums from 1998 - today. Enjoy !'],
  [1236,596,'You are allowed to change this patch. You are not allowed to sell it or\nparts of it in your own patches without my permission. You are not\nallowed to remove this text  or any other copyright / CC notes'],
  [1612,1030,'reload buffer when Livein is\nturned off, set buffer to file\nafter writing & turn thing off'],
  [1606,1710,'click before closing\npatch. sets date info'],
  [1556,1824,'Granulator by Robert Henke. build 24.3.2011 13:47:16 DROP SAMPLE HERE','bright'],
]) node('note ' + c, x, y, t);

// Console dot grid
const con = document.getElementById('console');
for (let i = 0; i < 30; i++)
  shape(con, 'rect', { x: (i % 7) * 6, y: Math.floor(i / 7) * 8, width: 4, height: 6 });
```
